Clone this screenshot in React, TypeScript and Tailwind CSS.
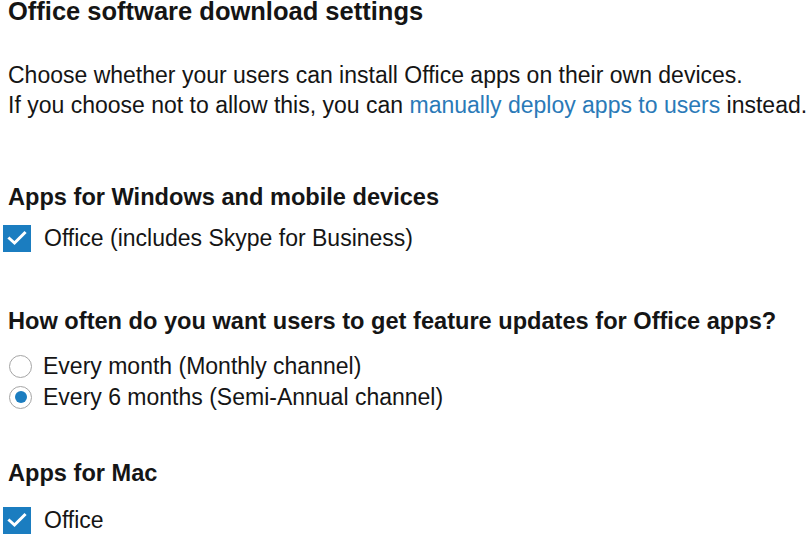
import React from 'react';

const Check = () => (
  <span className="flex h-[27px] w-[28px] shrink-0 items-center justify-center bg-[#1b7dc0]">
    <svg width="20" height="16" viewBox="0 0 20 16" fill="none">
      <path d="M2.5 8.5 L7.5 13 L17.5 3" stroke="white" strokeWidth="3" strokeLinecap="square" />
    </svg>
  </span>
);

const Radio = ({ on }: { on?: boolean }) => (
  <span className="flex h-[23px] w-[23px] shrink-0 items-center justify-center rounded-full border border-[#a5a5a5] bg-white">
    {on && <span className="h-[12px] w-[12px] rounded-full bg-[#1b7dc0]" />}
  </span>
);

export default function App() {
  return (
    <div className="h-[534px] w-[811px] overflow-hidden bg-white pl-[8px] text-[23px] text-[#151515] font-['Liberation_Sans',Arial,sans-serif]">
      <h1 className="mt-[-4px] text-[25.5px] font-bold leading-[30px]">Office software download settings</h1>

      <p className="mt-[34px] leading-[30px]">
        Choose whether your users can install Office apps on their own devices.
        <br />
        If you choose not to allow this, you can{' '}
        <a className="text-[#2a7ab8]">manually deploy apps to users</a> instead.
      </p>

      <h2 className="mt-[62px] text-[23.6px] font-bold leading-[30px]">Apps for Windows and mobile devices</h2>
      <label className="mt-[11px] ml-[-5px] flex h-[30px] items-center gap-[13px]">
        <Check />
        <span className="leading-[30px]">Office (includes Skype for Business)</span>
      </label>

      <h2 className="mt-[53px] text-[23.6px] font-bold leading-[30px]">How often do you want users to get feature updates for Office apps?</h2>
      <div className="mt-[15px] flex flex-col gap-[1px]">
        <label className="flex h-[30px] items-center gap-[11px] ml-[1px]">
          <Radio />
          <span className="leading-[30px]">Every month (Monthly channel)</span>
        </label>
        <label className="flex h-[30px] items-center gap-[11px] ml-[1px]">
          <Radio on />
          <span className="leading-[30px]">Every 6 months (Semi-Annual channel)</span>
        </label>
      </div>

      <h2 className="mt-[46px] text-[23.6px] font-bold leading-[30px]">Apps for Mac</h2>
      <label className="mt-[17px] ml-[-5px] flex h-[30px] items-center gap-[13px]">
        <Check />
        <span className="leading-[30px]">Office</span>
      </label>
    </div>
  );
}
